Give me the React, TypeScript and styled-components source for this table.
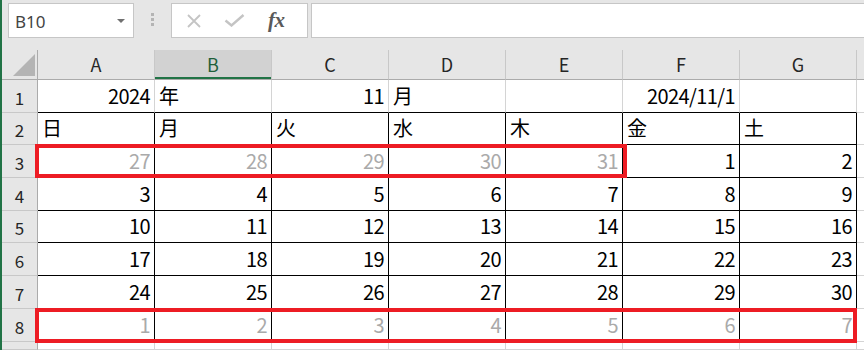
import React from 'react'
import styled, { createGlobalStyle } from 'styled-components'

const GlobalStyle = createGlobalStyle`
    html, body {
        margin: 0;
        padding: 0;
        overflow: hidden;
        background: #e6e6e6;
    }
`

const excelGreen = '#217346'
const headerBorder = '#ababab'
const headerDivider = '#c8c8c8'
const gridLine = '#d4d4d4'
const cellFont = `"Noto Sans CJK JP", "Noto Sans", sans-serif`

type Align = 'left' | 'right'

interface CellData {
    text: string
    align?: Align
    muted?: boolean
}

const columns = ['A', 'B', 'C', 'D', 'E', 'F', 'G']
const weekdays = ['日', '月', '火', '水', '木', '金', '土']

const num = (n: number, muted = false): CellData => ({ text: String(n), align: 'right', muted })

// November 2024, starting on Friday
const rows: CellData[][] = [
    [
        { text: '2024', align: 'right' },
        { text: '年' },
        { text: '11', align: 'right' },
        { text: '月' },
        { text: '' },
        { text: '2024/11/1', align: 'right' },
        { text: '' },
    ],
    weekdays.map((d) => ({ text: d })),
    [num(27, true), num(28, true), num(29, true), num(30, true), num(31, true), num(1), num(2)],
    [3, 4, 5, 6, 7, 8, 9].map((n) => num(n)),
    [10, 11, 12, 13, 14, 15, 16].map((n) => num(n)),
    [17, 18, 19, 20, 21, 22, 23].map((n) => num(n)),
    [24, 25, 26, 27, 28, 29, 30].map((n) => num(n)),
    [1, 2, 3, 4, 5, 6, 7].map((n) => num(n, true)),
]

const App: React.FC = () => {
    return (
        <>
            <GlobalStyle />
            <Window>
                <FormulaBar>
                    <NameBox>
                        <span>B10</span>
                        <Caret />
                    </NameBox>
                    <Grip>
                        <i />
                        <i />
                        <i />
                    </Grip>
                    <FormulaButtons>
                        <svg width="16" height="14" viewBox="0 0 16 14">
                            <path d="M2 1 L14 13 M14 1 L2 13" stroke="#c4c4c4" strokeWidth="1.8" fill="none" />
                        </svg>
                        <svg width="21" height="13" viewBox="0 0 21 13">
                            <path d="M1.5 6.5 L7.5 11.5 L19.5 1" stroke="#c4c4c4" strokeWidth="2.4" fill="none" />
                        </svg>
                        <Fx>fx</Fx>
                    </FormulaButtons>
                    <FormulaInput />
                </FormulaBar>

                <Sheet>
                    <Corner>
                        <CornerMark />
                    </Corner>
                    {columns.map((c) => (
                        <ColHeader key={c} $selected={c === 'B'}>
                            {c}
                        </ColHeader>
                    ))}
                    <ColHeader $selected={false} />

                    {rows.map((row, r) => (
                        <React.Fragment key={r}>
                            <RowHeader>{r + 1}</RowHeader>
                            {row.map((cell, c) => (
                                <Cell
                                    key={c}
                                    $align={cell.align ?? 'left'}
                                    $muted={!!cell.muted}
                                    $right={r >= 1 ? '#000' : gridLine}
                                    $bottom="#000"
                                >
                                    {cell.text}
                                </Cell>
                            ))}
                            <Cell $align="left" $muted={false} $right={gridLine} $bottom={gridLine} />
                        </React.Fragment>
                    ))}

                    {/* row 9 is only a sliver at the bottom edge */}
                    <RowHeader />
                    {[...columns, 'H'].map((c) => (
                        <Cell key={c} $align="left" $muted={false} $right={gridLine} $bottom={gridLine} />
                    ))}

                    <Highlight style={{ left: 33, top: 94, width: 592, height: 34 }} />
                    <Highlight style={{ left: 33, top: 258, width: 822, height: 35 }} />
                </Sheet>
            </Window>
        </>
    )
}

export default App

const Window = styled.div`
    width: 864px;
    height: 350px;
    box-sizing: border-box;
    border-left: 2px solid ${excelGreen};
    display: flex;
    flex-direction: column;
    background: #e6e6e6;
`

const FormulaBar = styled.div`
    height: 50px;
    flex: none;
    display: flex;
    align-items: flex-start;
    padding: 3px 0 0 6px;
    box-sizing: border-box;
`

const NameBox = styled.div`
    width: 126px;
    height: 35px;
    box-sizing: border-box;
    border: 1px solid #c6c6c6;
    background: #fff;
    display: flex;
    align-items: center;
    justify-content: space-between;
    padding: 2px 8px 0 6px;
    font-family: "Noto Sans", sans-serif;
    font-size: 17px;
    color: #444;
`

const Caret = styled.span`
    width: 0;
    height: 0;
    margin-top: -2px;
    border-left: 4px solid transparent;
    border-right: 4px solid transparent;
    border-top: 4px solid #707070;
`

const Grip = styled.div`
    margin: 10px 0 0 17px;
    display: flex;
    flex-direction: column;
    gap: 2px;

    i {
        display: block;
        width: 3px;
        height: 3px;
        background: #b4b4b4;
    }
`

const FormulaButtons = styled.div`
    width: 137px;
    height: 35px;
    margin-left: 17px;
    box-sizing: border-box;
    border: 1px solid #c6c6c6;
    background: #fff;
    display: flex;
    align-items: center;
    padding: 0 0 0 14px;
    gap: 22px;

    svg {
        display: block;
    }
`

const Fx = styled.span`
    font-family: "Liberation Serif", "DejaVu Serif", serif;
    font-style: italic;
    font-size: 21px;
    font-weight: 600;
    color: #5a5a5a;
    margin-left: 1px;
    margin-top: 0;
    letter-spacing: -0.5px;
`

const FormulaInput = styled.div`
    flex: 1;
    height: 35px;
    margin: 0 -4px 0 3px;
    box-sizing: border-box;
    border: 1px solid #c6c6c6;
    background: #fff;
`

const Sheet = styled.div`
    position: relative;
    flex: 1;
    display: grid;
    grid-template-columns: 36px repeat(7, 117px) 1fr;
    grid-template-rows: 30px 33px 32px 33px 33px 32px 33px 33px 33px 1fr;
    background: #fff;
    overflow: hidden;
`

const Corner = styled.div`
    box-sizing: border-box;
    background: #e6e6e6;
    border-right: 1px solid ${headerBorder};
    border-bottom: 1px solid ${headerBorder};
    display: flex;
    justify-content: flex-end;
    align-items: flex-end;
    padding: 0 2px 3px 0;
`

const CornerMark = styled.div`
    width: 22px;
    height: 22px;
    background: #b4b4b4;
    clip-path: polygon(100% 0, 100% 100%, 0 100%);
`

const ColHeader = styled.div<{ $selected: boolean }>`
    box-sizing: border-box;
    background: ${(p) => (p.$selected ? '#d2d2d2' : '#e6e6e6')};
    box-shadow: ${(p) => (p.$selected ? `inset 0 -2px 0 ${excelGreen}` : 'none')};
    border-right: 1px solid ${headerDivider};
    border-bottom: 1px solid ${headerBorder};
    display: flex;
    align-items: center;
    justify-content: center;
    padding-bottom: 1px;
    font-family: ${cellFont};
    font-size: 18px;
    color: ${(p) => (p.$selected ? '#1f5f3a' : '#262626')};
`

const RowHeader = styled.div`
    box-sizing: border-box;
    background: #e6e6e6;
    border-right: 1px solid ${headerBorder};
    border-bottom: 1px solid ${headerDivider};
    display: flex;
    align-items: center;
    justify-content: center;
    padding-top: 2px;
    font-family: ${cellFont};
    font-size: 17px;
    color: #262626;
`

const Cell = styled.div<{ $align: Align; $muted: boolean; $right: string; $bottom: string }>`
    box-sizing: border-box;
    min-width: 0;
    overflow: hidden;
    white-space: nowrap;
    border-right: 1px solid ${(p) => p.$right};
    border-bottom: 1px solid ${(p) => p.$bottom};
    display: flex;
    align-items: flex-end;
    justify-content: ${(p) => (p.$align === 'right' ? 'flex-end' : 'flex-start')};
    padding: 0 4px 2px 4px;
    font-family: ${cellFont};
    font-size: 20px;
    letter-spacing: -0.6px;
    color: ${(p) => (p.$muted ? '#aaaaaa' : '#000')};
`

const Highlight = styled.div`
    position: absolute;
    box-sizing: border-box;
    border: 4px solid #ed1c24;
    pointer-events: none;
`
